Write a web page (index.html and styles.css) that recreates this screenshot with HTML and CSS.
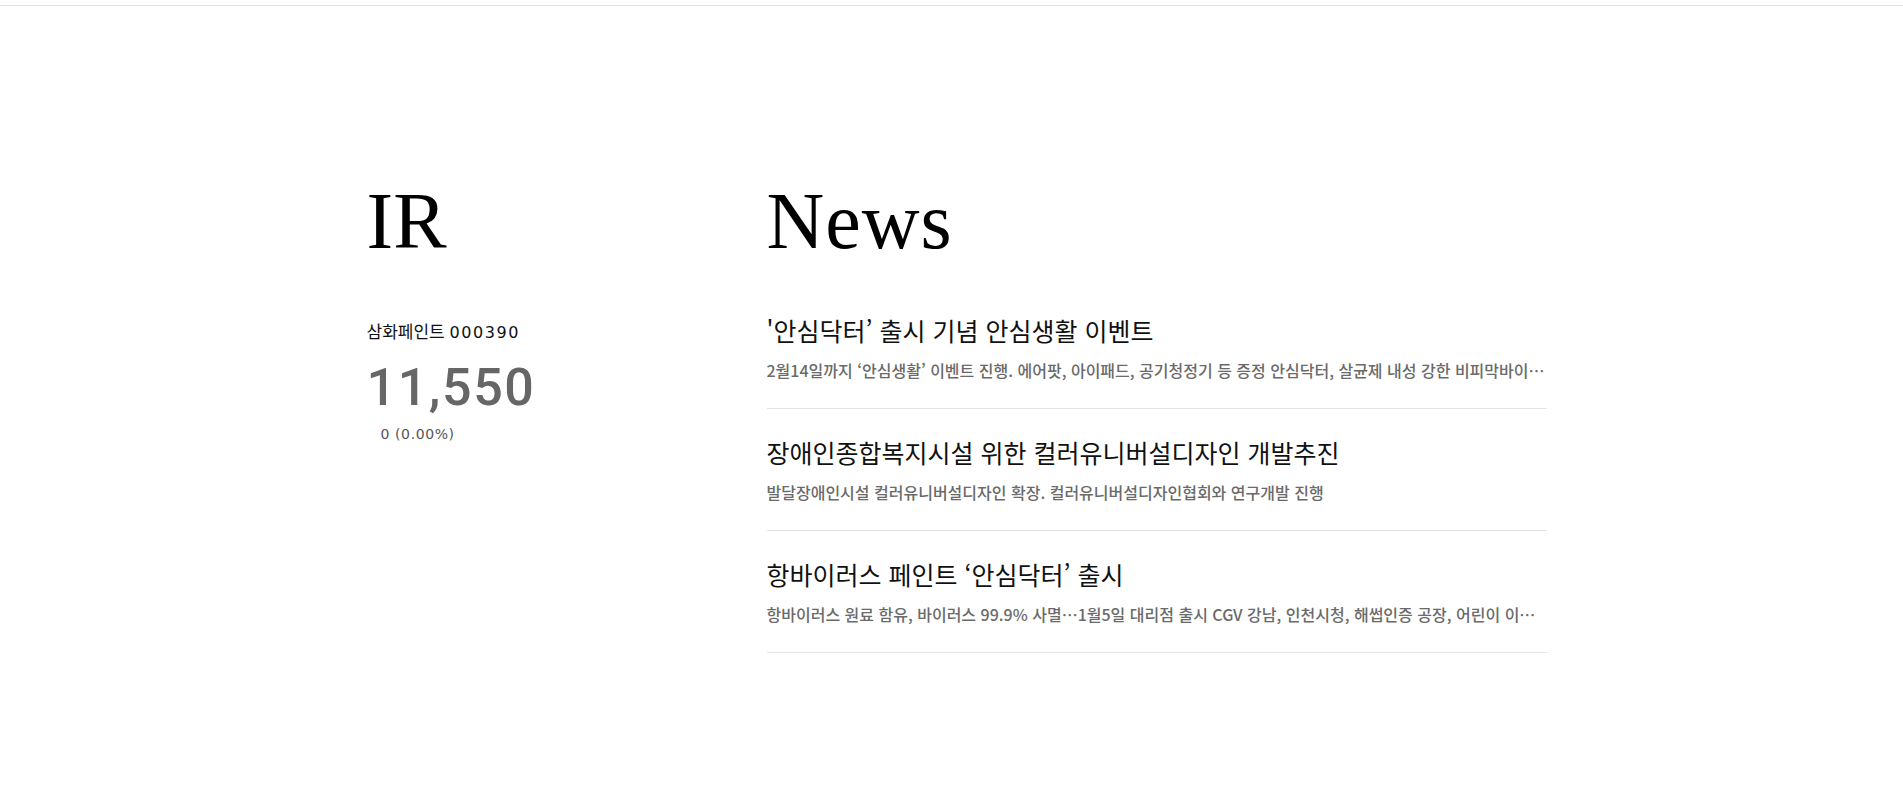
FILE: index.html
```html
<!DOCTYPE html>
<html lang="ko">
<head>
<meta charset="utf-8">
<title>IR &amp; News</title>
<link rel="stylesheet" href="styles.css">
</head>
<body>
<header class="topbar"></header>
<main class="section">
  <div class="container">
    <div class="ir-col">
      <h2 class="heading">IR</h2>
      <div class="stock">
        <p class="stock-name">삼화페인트 <span class="code">000390</span></p>
        <p class="price">11,550</p>
        <p class="change">0 (0.00%)</p>
      </div>
    </div>
    <div class="news-col">
      <h2 class="heading">News</h2>
      <ul class="news-list">
        <li class="news-item">
          <a class="news-link" href="#">
            <h3 class="news-title">'안심닥터’ 출시 기념 안심생활 이벤트</h3>
            <p class="news-desc">2월14일까지 ‘안심생활’ 이벤트 진행. 에어팟, 아이패드, 공기청정기 등 증정 안심닥터, 살균제 내성 강한 비피막바이러스까지 잡는 항바이러스 페인트</p>
          </a>
        </li>
        <li class="news-item">
          <a class="news-link" href="#">
            <h3 class="news-title">장애인종합복지시설 위한 컬러유니버설디자인 개발추진</h3>
            <p class="news-desc">발달장애인시설 컬러유니버설디자인 확장. 컬러유니버설디자인협회와 연구개발 진행</p>
          </a>
        </li>
        <li class="news-item">
          <a class="news-link" href="#">
            <h3 class="news-title">항바이러스 페인트 ‘안심닥터’ 출시</h3>
            <p class="news-desc">항바이러스 원료 함유, 바이러스 99.9% 사멸…1월5일 대리점 출시 CGV 강남, 인천시청, 해썹인증 공장, 어린이 이용시설 등에 적용</p>
          </a>
        </li>
      </ul>
    </div>
  </div>
</main>
</body>
</html>
```
FILE: styles.css
```css
* { box-sizing: border-box; }

html, body {
  margin: 0;
  padding: 0;
  background: #fff;
}

body {
  font-family: "Noto Sans CJK KR", "Noto Sans", sans-serif;
  color: #111;
}

.topbar {
  height: 6px;
  border-bottom: 1px solid #e3e3e3;
}

.section {
  padding-top: 175px;
  padding-bottom: 120px;
}

.container {
  display: flex;
  width: 1180px;
  margin-left: calc(50% - 585px);
}

.ir-col {
  flex: 0 0 400px;
}

.news-col {
  flex: 0 0 780px;
  min-width: 0;
}

.heading {
  margin: 0;
  font-family: "Liberation Serif", "Times New Roman", serif;
  font-weight: 400;
  font-size: 80px;
  line-height: 80px;
  color: #000;
}

.news-col .heading {
  letter-spacing: 1px;
}

.stock {
  margin-top: 58px;
}

.stock-name {
  margin: 0;
  font-size: 17px;
  line-height: 24px;
  color: #111;
}

.code {
  font-family: "DejaVu Sans", sans-serif;
  font-size: 16px;
  letter-spacing: 1.6px;
}

.price {
  margin: 13px 0 0;
  font-family: Roboto, "Noto Sans", sans-serif;
  font-size: 52px;
  line-height: 60px;
  font-weight: 500;
  letter-spacing: 1.6px;
  color: #666;
}

.change {
  margin: 6px 0 0;
  padding-left: 14px;
  font-family: "DejaVu Sans", sans-serif;
  font-size: 14px;
  line-height: 20px;
  letter-spacing: 0.6px;
  color: #555;
}

.news-list {
  list-style: none;
  margin: 26px 0 0;
  padding: 0;
}

.news-item {
  border-bottom: 1px solid #e2e2e2;
}

.news-link {
  display: block;
  padding: 27px 0 26px;
  color: inherit;
  text-decoration: none;
}

.news-title {
  margin: 0;
  font-size: 25px;
  line-height: 32px;
  font-weight: 400;
  color: #111;
}

.news-desc {
  margin: 12px 0 0;
  font-size: 16px;
  line-height: 24px;
  font-weight: 500;
  color: #6a6a6a;
  white-space: nowrap;
  overflow: hidden;
  text-overflow: ellipsis;
}
```
